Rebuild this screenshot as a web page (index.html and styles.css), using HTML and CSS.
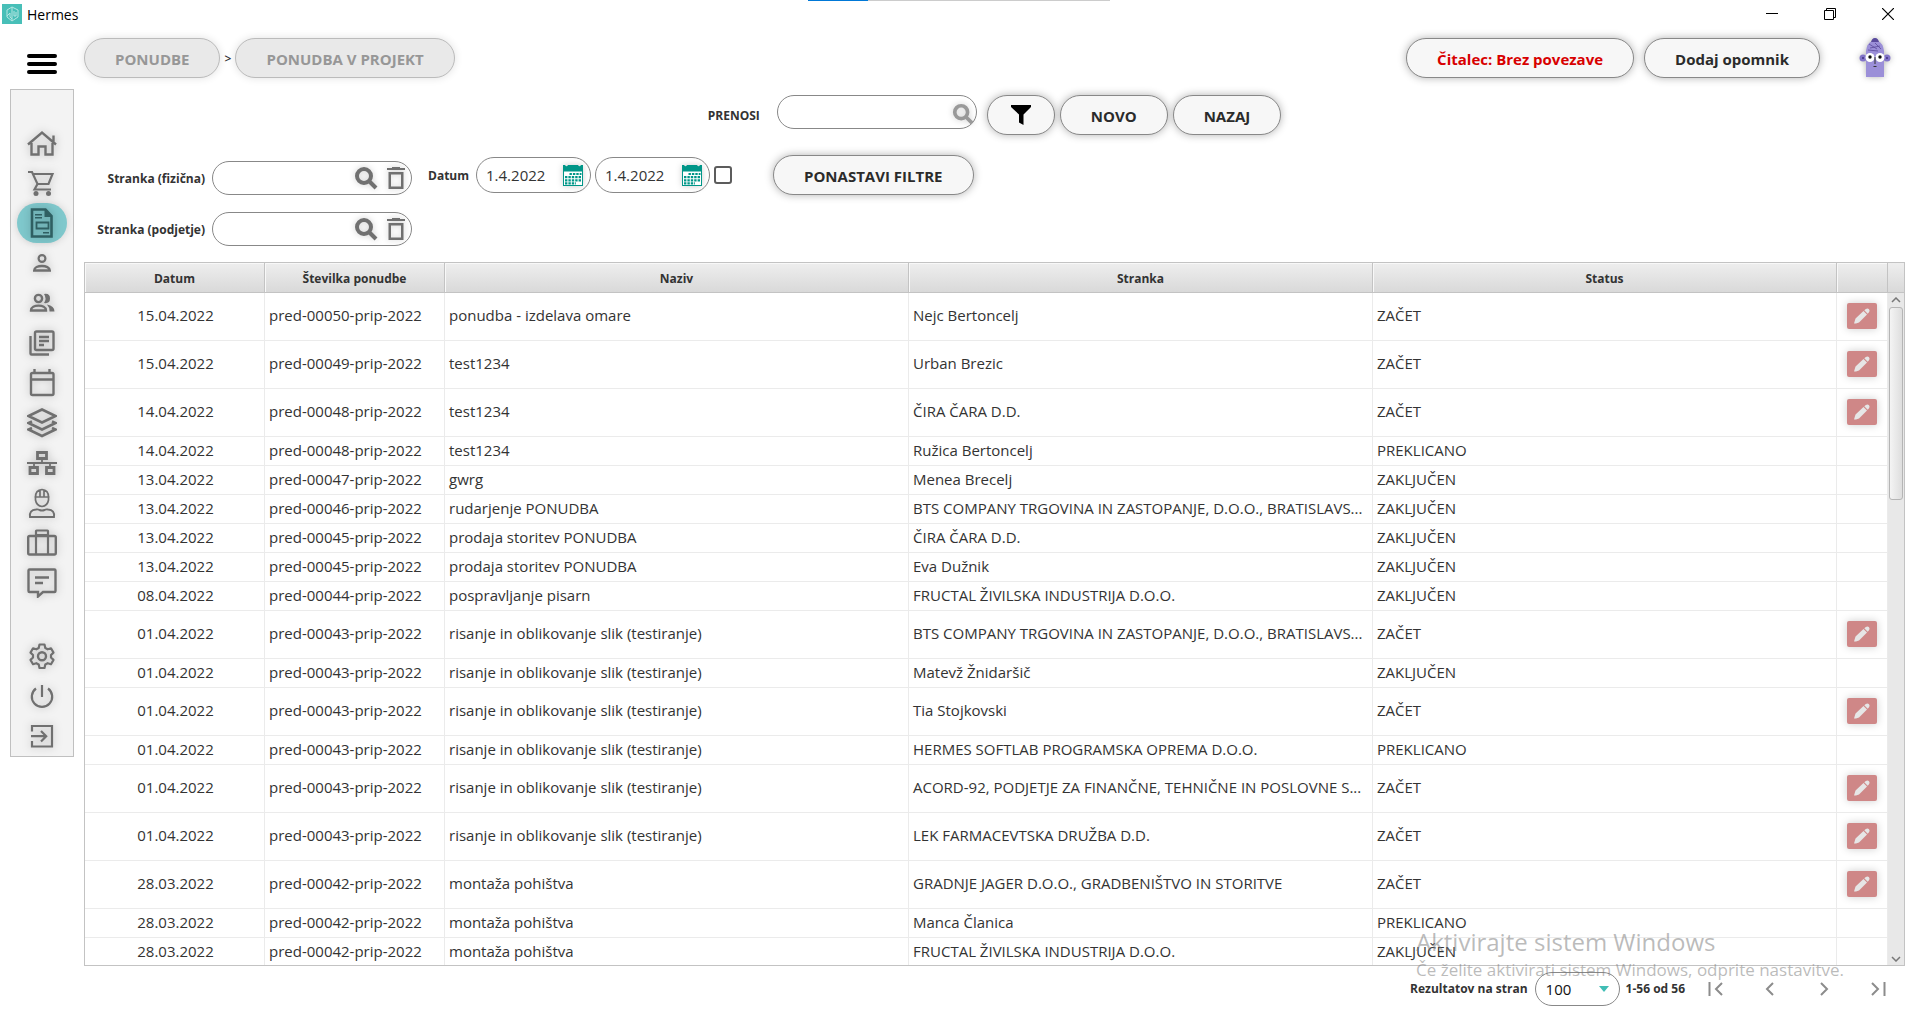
FILE: index.html
```
<!DOCTYPE html>
<html lang="sl">
<head>
  <meta charset="UTF-8">
  <title>Hermes</title>
  <meta name="viewport" content="width=device-width, initial-scale=1.0">
  <link rel="stylesheet" href="styles.css">
</head>
<body>
  <svg class="sprite" aria-hidden="true">
    <symbol id="i-search" viewBox="0 0 24 24"><circle cx="10" cy="10" r="7" fill="none" stroke="currentColor" stroke-width="4"/><path d="M15 15l7 7" stroke="currentColor" stroke-width="4"/></symbol>
    <symbol id="i-trash" viewBox="0 0 18 22"><path d="M0 1h5V0h8v1h5v2H0zM1.500 5h15v17h-15zM4 7.500v12h10v-12z" fill="currentColor" fill-rule="evenodd"/></symbol>
    <symbol id="i-calendar-green" viewBox="0 0 20 22"><path d="M0 1h2q1.500 2.500 3 0h10q1.500 2.500 3 0h2v21H0z" fill="#009688"/><path d="M1 7.500h18V21H1z" fill="#fff"/><path d="M6.500 10h12M2 13.200h16.500M2 16.400h16.500M2 19.400h11" stroke="#009688" stroke-width="2.200" stroke-dasharray="2.400 1"/></symbol>
    <symbol id="i-pencil" viewBox="0 0 18 18"><path d="M1 16.500l1.500-5L10.500 4l3.500 3.500L6 15.500l-3 1zM11.300 3.300l1.500-1.300q2-1.200 3.200.2t0 3l-1.300 1.500z" fill="#e6e6e6"/></symbol>
  </svg>

  <div class="titlebar">
    <svg class="logo" viewBox="0 0 20 20"><rect width="20" height="20" fill="#48bfb8"/><path d="M10 3l-5 3v7l5 4 6-4V6zM5 12l3-3v4l2 2M10 3v14M12 7v5h2V8" fill="none" stroke="#b5e6e2"/></svg>
    <span class="title">Hermes</span>
    <div class="window-buttons">
      <button aria-label="Minimiraj"><svg width="12" height="12" viewBox="0 0 12 12"><path d="M0 5.500h12" stroke="#000"/></svg></button>
      <button aria-label="Obnovi"><svg width="12" height="12" viewBox="0 0 12 12"><path d="M.5 2.500h9v9h-9zM2.500 2V.5h9v9H10" fill="none" stroke="#000"/></svg></button>
      <button aria-label="Zapri"><svg width="12" height="12" viewBox="0 0 12 12"><path d="M0 0l12 12M12 0L0 12" stroke="#000" stroke-width="1.200"/></svg></button>
    </div>
    <div class="progress"></div>
  </div>

  <div class="app">
    <aside>
      <button class="menu" aria-label="Meni"><svg width="30" height="20" viewBox="0 0 30 20"><path d="M2 2h26M2 10h26M2 18h26" stroke="#000" stroke-width="4" stroke-linecap="round"/></svg></button>
      <nav class="sidebar">
        <a href="#" aria-label="Domov"><svg viewBox="0 0 30 30"><path d="M1 16.500L15 4.500l14 12M4.500 15v11.500h7v-8h7v8h7V15M26.500 14V7.500" fill="none" stroke="currentColor" stroke-width="2.400"/></svg></a>
        <a href="#" aria-label="Prodaja"><svg viewBox="0 0 30 30"><path d="M1 4h4l5.500 12h11L25.500 6H6.500M10.500 16l-3 5.500H24" fill="none" stroke="currentColor" stroke-width="2.200"/><circle cx="9" cy="25.500" r="2.500" fill="currentColor"/><circle cx="21.500" cy="25.500" r="2.500" fill="currentColor"/></svg></a>
        <a href="#" class="active" aria-label="Ponudbe"><svg viewBox="0 0 30 30"><path d="M5 1.500h13.500l6 6.500v20.500H5z" fill="none" stroke="currentColor" stroke-width="2.600"/><path d="M17.500 1.500v7.500h7zM8 6h7v1.500H8zM8 9h7v1.500H8zM16 24h6v1.500h-6z" fill="currentColor"/><path d="M9.500 14.500h12v6h-12z" fill="none" stroke="currentColor" stroke-width="1.800"/></svg></a>
        <a href="#" aria-label="Stranka"><svg viewBox="0 0 30 30"><circle cx="15" cy="10.500" r="3.400" fill="none" stroke="currentColor" stroke-width="2.200"/><path d="M7.200 22.500c0-6 15.600-6 15.600 0z" fill="none" stroke="currentColor" stroke-width="2.400"/></svg></a>
        <a href="#" aria-label="Stranke"><svg viewBox="0 0 30 30"><circle cx="11.500" cy="10.500" r="3.600" fill="none" stroke="currentColor" stroke-width="2.400"/><path d="M4 22.500c0-6.500 15-6.500 15 0z" fill="none" stroke="currentColor" stroke-width="2.400"/><path d="M17 6q6-1 6 4.500t-6 4.500q3-4.500 0-9zM20 16.500q7.500 1.500 7.500 7h-5q0-4.500-2.500-7z" fill="currentColor"/></svg></a>
        <a href="#" aria-label="Dokumenti"><svg viewBox="0 0 30 30"><rect x="8" y="3.500" width="18.500" height="18.500" rx="1.500" fill="none" stroke="currentColor" stroke-width="2.400"/><path d="M3.500 8v17.500q0 1 1 1H22M12 9h10M12 13h10M12 17h5" fill="none" stroke="currentColor" stroke-width="2.400"/></svg></a>
        <a href="#" aria-label="Koledar"><svg viewBox="0 0 30 30"><rect x="4" y="5" width="22.500" height="22" rx="1.500" fill="none" stroke="currentColor" stroke-width="2.400"/><path d="M3 11.500h24M7.500 1v4M22.500 1v4" stroke="currentColor" stroke-width="2.400"/></svg></a>
        <a href="#" aria-label="Artikli"><svg viewBox="0 0 30 30"><path d="M15 1.500l13.500 6.500L15 14.500 1.500 8zM5 13.500L1.500 15 15 21.500 28.500 15 25 13.500M5 20l-3.500 1.500L15 28l13.500-6.500L25 20" fill="none" stroke="currentColor" stroke-width="2.500"/></svg></a>
        <a href="#" aria-label="Struktura"><svg viewBox="0 0 30 30"><path d="M0 15h30M15 11v4M7 15v4M23 15v4" stroke="currentColor" stroke-width="1.800"/><path d="M10.500 4.500h9v6h-9zM3 19.500h7.500v6H3zM19.500 19.500H27v6h-7.500z" fill="none" stroke="currentColor" stroke-width="2.800"/></svg></a>
        <a href="#" aria-label="Delavci"><svg viewBox="0 0 30 30"><path d="M8.500 9q0-7 6.500-7.500 6.500.5 6.500 7.500v3q-1 6-6.500 6.500-5.500-.5-6.500-6.500zM7.500 9h15M13 2v7M17 2v7" fill="none" stroke="currentColor" stroke-width="1.700"/><path d="M3 29q-1-7 6-7.500 2-.5 3.500.5 2.500 1 5 0 1.500-1 3.500-.5 7 .5 6 7.500z" fill="none" stroke="currentColor" stroke-width="1.900"/></svg></a>
        <a href="#" aria-label="Projekti"><svg viewBox="0 0 30 30"><rect x="1.200" y="8" width="27.600" height="18.500" rx="1.500" fill="none" stroke="currentColor" stroke-width="2.400"/><path d="M9 26V3q0-.5.500-.5h11q.5 0 .5.500v23M9 7h12" fill="none" stroke="currentColor" stroke-width="2.200"/></svg></a>
        <a href="#" aria-label="Sporočila"><svg viewBox="0 0 30 30"><path d="M2.500 1.500h25q1 0 1 1V23q0 1-1 1H16l-5 4.500V24H2.500q-1 0-1-1V2.500q0-1 1-1zM8 9.500h14M8 15h8" fill="none" stroke="currentColor" stroke-width="2.400"/></svg></a>
        <a href="#" class="group" aria-label="Nastavitve"><svg viewBox="0 0 30 30"><path d="M12.500 3.500h5l.8 3.500 2.400 1.300 3.300-1 2.500 4.300-2.500 2.400v2.500l2.500 2.400-2.500 4.300-3.300-1-2.400 1.300-.8 3.500h-5l-.8-3.500-2.400-1.300-3.300 1-2.500-4.300L6 16.500V14l-2.500-2.400L6 7.300l3.300 1L11.700 7z" fill="none" stroke="currentColor" stroke-width="2.200" stroke-linejoin="round"/><circle cx="15" cy="15.200" r="4" fill="none" stroke="currentColor" stroke-width="2.400"/></svg></a>
        <a href="#" aria-label="Odjava"><svg viewBox="0 0 30 30"><path d="M9 7.500a10.200 10.200 0 1 0 12 0M15 4v12" fill="none" stroke="currentColor" stroke-width="2.200"/></svg></a>
        <a href="#" aria-label="Izhod"><svg viewBox="0 0 30 30"><path d="M5 10.500V5h20v20.500H5V20M4 15.200h14M14 10l5.200 5.200L14 20.500" fill="none" stroke="currentColor" stroke-width="2.200"/></svg></a>
      </nav>
    </aside>

    <main>
      <header>
        <button class="btn" disabled>PONUDBE</button>
        <span class="crumb">&gt;</span>
        <button class="btn" disabled>PONUDBA V PROJEKT</button>
        <button class="btn reader">Čitalec: Brez povezave</button>
        <button class="btn reminder">Dodaj opomnik</button>
        <svg class="avatar" viewBox="0 0 32 40">
          <path d="M7 39V13Q8 5 13 3q1-3 3-3t3 3q5 2 6 10v26z" fill="#9b8fd8"/>
          <path d="M12 4q1-4 4-4t4 4z" fill="#5a4a9c"/>
          <path d="M10 6l8 5M11 10l10-2M16 5l6 6M9 12l10 1" stroke="#5a4a9c" stroke-width=".8"/>
          <circle cx="4" cy="20" r="3.500" fill="#8274c8"/><circle cx="28" cy="20" r="3.500" fill="#8274c8"/>
          <path d="M3 19h2v2H3zM27 19h2v2h-2z" fill="#4f4192"/>
          <circle cx="11" cy="19.500" r="4.500" fill="#fff"/><circle cx="21" cy="19.500" r="4.500" fill="#fff"/>
          <circle cx="11" cy="19" r="1.700" fill="#111"/><circle cx="21" cy="19" r="1.700" fill="#111"/>
          <path d="M16 19v7M14.500 28.500h3" stroke="#333" fill="none"/>
        </svg>
      </header>

      <form class="search-row">
        <label for="search">PRENOSI</label>
        <div class="field pale"><input id="search" type="text"><svg class="search-icon"><use href="#i-search"/></svg></div>
        <div class="actions">
          <button type="button" class="btn filter" aria-label="Filter"><svg width="20" height="20" viewBox="0 0 20 20"><path d="M0 0h20v2l-7.500 7.500V20L8 17.500v-8L0 2z"/></svg></button>
          <button type="button" class="btn">NOVO</button>
          <button type="button" class="btn">NAZAJ</button>
        </div>
      </form>

      <form class="filters">
        <div class="clients">
          <label for="person">Stranka (fizična)</label>
          <div class="field"><input id="person" type="text"><svg class="search-icon"><use href="#i-search"/></svg><svg class="trash-icon"><use href="#i-trash"/></svg></div>
          <label for="company">Stranka (podjetje)</label>
          <div class="field"><input id="company" type="text"><svg class="search-icon"><use href="#i-search"/></svg><svg class="trash-icon"><use href="#i-trash"/></svg></div>
        </div>
        <div class="dates">
          <label for="from">Datum</label>
          <div class="field date"><input id="from" type="text" value="1.4.2022"><svg><use href="#i-calendar-green"/></svg></div>
          <div class="field date"><input aria-label="Datum do" type="text" value="1.4.2022"><svg><use href="#i-calendar-green"/></svg></div>
          <input class="check" type="checkbox" aria-label="Filtriraj po datumu">
        </div>
        <button type="reset" class="btn reset">PONASTAVI FILTRE</button>
      </form>

      <div class="table-box">
        <div class="table-view">
          <table>
            <colgroup><col class="c-short"><col class="c-short"><col><col><col><col class="c-edit"></colgroup>
            <thead>
              <tr><th>Datum</th><th>Številka ponudbe</th><th>Naziv</th><th>Stranka</th><th>Status</th><th></th></tr>
            </thead>
            <tbody>
              <tr><td>15.04.2022</td><td>pred-00050-prip-2022</td><td>ponudba - izdelava omare</td><td>Nejc Bertoncelj</td><td>ZAČET</td><td><button class="edit" aria-label="Uredi"><svg><use href="#i-pencil"/></svg></button></td></tr>
              <tr><td>15.04.2022</td><td>pred-00049-prip-2022</td><td>test1234</td><td>Urban Brezic</td><td>ZAČET</td><td><button class="edit" aria-label="Uredi"><svg><use href="#i-pencil"/></svg></button></td></tr>
              <tr><td>14.04.2022</td><td>pred-00048-prip-2022</td><td>test1234</td><td>ČIRA ČARA D.D.</td><td>ZAČET</td><td><button class="edit" aria-label="Uredi"><svg><use href="#i-pencil"/></svg></button></td></tr>
              <tr><td>14.04.2022</td><td>pred-00048-prip-2022</td><td>test1234</td><td>Ružica Bertoncelj</td><td>PREKLICANO</td><td></td></tr>
              <tr><td>13.04.2022</td><td>pred-00047-prip-2022</td><td>gwrg</td><td>Menea Brecelj</td><td>ZAKLJUČEN</td><td></td></tr>
              <tr><td>13.04.2022</td><td>pred-00046-prip-2022</td><td>rudarjenje PONUDBA</td><td>BTS COMPANY TRGOVINA IN ZASTOPANJE, D.O.O., BRATISLAVS...</td><td>ZAKLJUČEN</td><td></td></tr>
              <tr><td>13.04.2022</td><td>pred-00045-prip-2022</td><td>prodaja storitev PONUDBA</td><td>ČIRA ČARA D.D.</td><td>ZAKLJUČEN</td><td></td></tr>
              <tr><td>13.04.2022</td><td>pred-00045-prip-2022</td><td>prodaja storitev PONUDBA</td><td>Eva Dužnik</td><td>ZAKLJUČEN</td><td></td></tr>
              <tr><td>08.04.2022</td><td>pred-00044-prip-2022</td><td>pospravljanje pisarn</td><td>FRUCTAL ŽIVILSKA INDUSTRIJA D.O.O.</td><td>ZAKLJUČEN</td><td></td></tr>
              <tr><td>01.04.2022</td><td>pred-00043-prip-2022</td><td>risanje in oblikovanje slik (testiranje)</td><td>BTS COMPANY TRGOVINA IN ZASTOPANJE, D.O.O., BRATISLAVS...</td><td>ZAČET</td><td><button class="edit" aria-label="Uredi"><svg><use href="#i-pencil"/></svg></button></td></tr>
              <tr><td>01.04.2022</td><td>pred-00043-prip-2022</td><td>risanje in oblikovanje slik (testiranje)</td><td>Matevž Žnidaršič</td><td>ZAKLJUČEN</td><td></td></tr>
              <tr><td>01.04.2022</td><td>pred-00043-prip-2022</td><td>risanje in oblikovanje slik (testiranje)</td><td>Tia Stojkovski</td><td>ZAČET</td><td><button class="edit" aria-label="Uredi"><svg><use href="#i-pencil"/></svg></button></td></tr>
              <tr><td>01.04.2022</td><td>pred-00043-prip-2022</td><td>risanje in oblikovanje slik (testiranje)</td><td>HERMES SOFTLAB PROGRAMSKA OPREMA D.O.O.</td><td>PREKLICANO</td><td></td></tr>
              <tr><td>01.04.2022</td><td>pred-00043-prip-2022</td><td>risanje in oblikovanje slik (testiranje)</td><td>ACORD-92, PODJETJE ZA FINANČNE, TEHNIČNE IN POSLOVNE S...</td><td>ZAČET</td><td><button class="edit" aria-label="Uredi"><svg><use href="#i-pencil"/></svg></button></td></tr>
              <tr><td>01.04.2022</td><td>pred-00043-prip-2022</td><td>risanje in oblikovanje slik (testiranje)</td><td>LEK FARMACEVTSKA DRUŽBA D.D.</td><td>ZAČET</td><td><button class="edit" aria-label="Uredi"><svg><use href="#i-pencil"/></svg></button></td></tr>
              <tr><td>28.03.2022</td><td>pred-00042-prip-2022</td><td>montaža pohištva</td><td>GRADNJE JAGER D.O.O., GRADBENIŠTVO IN STORITVE</td><td>ZAČET</td><td><button class="edit" aria-label="Uredi"><svg><use href="#i-pencil"/></svg></button></td></tr>
              <tr><td>28.03.2022</td><td>pred-00042-prip-2022</td><td>montaža pohištva</td><td>Manca Članica</td><td>PREKLICANO</td><td></td></tr>
              <tr><td>28.03.2022</td><td>pred-00042-prip-2022</td><td>montaža pohištva</td><td>FRUCTAL ŽIVILSKA INDUSTRIJA D.O.O.</td><td>ZAKLJUČEN</td><td></td></tr>
            </tbody>
          </table>
        </div>
        <div class="scrollbar">
          <div class="corner"></div>
          <svg viewBox="0 0 10 6"><path d="M1 5l4-4 4 4" fill="none" stroke="#777" stroke-width="1.500"/></svg>
          <div class="thumb"></div>
          <svg class="down" viewBox="0 0 10 6"><path d="M1 1l4 4 4-4" fill="none" stroke="#777" stroke-width="1.500"/></svg>
        </div>
      </div>

      <footer>
        <label for="per-page">Rezultatov na stran</label>
        <div class="select"><select id="per-page"><option>100</option></select></div>
        <span class="range">1-56 od 56</span>
        <div class="pager">
          <button aria-label="Prva stran"><svg width="16" height="16" viewBox="0 0 16 16"><path d="M1.500 1v14M14 2L8 8l6 6"/></svg></button>
          <button aria-label="Prejšnja stran"><svg width="16" height="16" viewBox="0 0 16 16"><path d="M11 2L5 8l6 6"/></svg></button>
          <button aria-label="Naslednja stran"><svg width="16" height="16" viewBox="0 0 16 16"><path d="M5 2l6 6-6 6"/></svg></button>
          <button aria-label="Zadnja stran"><svg width="16" height="16" viewBox="0 0 16 16"><path d="M2 2l6 6-6 6M14.500 1v14"/></svg></button>
        </div>
      </footer>
    </main>
  </div>

  <div class="watermark">
    <p class="big">Aktivirajte sistem Windows</p>
    <p>Če želite aktivirati sistem Windows, odprite nastavitve.</p>
  </div>
</body>
</html>
```
FILE: styles.css
```
* {
  box-sizing: border-box;
}

body {
  margin: 0;
  height: 100vh;
  display: flex;
  flex-direction: column;
  overflow: hidden;
  background: #fff;
  color: #333;
  font-family: "Open Sans", sans-serif;
  font-size: 15px;
}

button,
input,
select {
  font: inherit;
  color: inherit;
  margin: 0;
}

button {
  border: none;
  background: none;
  padding: 0;
}

label {
  font-size: 12px;
  font-weight: 700;
  white-space: nowrap;
}

.sprite {
  display: none;
}

/* title bar */

.titlebar {
  position: relative;
  display: flex;
  align-items: center;
  height: 28px;
  padding: 0 26px 0 2px;
  color: #000;
}

.logo {
  width: 20px;
  height: 20px;
}

.title {
  margin-left: 5px;
  font-size: 14px;
}

.window-buttons {
  display: flex;
  gap: 46px;
  margin-left: auto;
}

.window-buttons button {
  width: 12px;
  height: 12px;
}

.window-buttons svg {
  display: block;
}

.progress {
  position: absolute;
  top: 0;
  left: 808px;
  width: 302px;
  height: 1px;
  background: linear-gradient(to right, #0078d7 20%, #ccc 20%);
}

.app {
  flex: 1;
  display: flex;
  min-height: 0;
  padding: 10px 15px 0 10px;
  gap: 10px;
}

/* sidebar */

aside {
  flex: none;
  width: 64px;
}

.menu {
  display: block;
  margin: 16px auto 15px;
}

.menu svg {
  display: block;
}

.sidebar {
  display: flex;
  flex-direction: column;
  align-items: center;
  padding-top: 33px;
  border: 1px solid #c0c0c0;
  background: #f3f3f3;
}

.sidebar a {
  display: flex;
  align-items: center;
  justify-content: center;
  width: 50px;
  height: 40px;
  border-radius: 20px;
  color: #707070;
}

.sidebar svg {
  width: 30px;
  height: 30px;
  filter: drop-shadow(0 0 4px rgba(0, 0, 0, 0.25));
}

.sidebar .active {
  background: #7fc8cc;
  color: #2f5f62;
  box-shadow: 0 0 8px rgba(0, 0, 0, 0.15);
}

.sidebar .group {
  margin-top: 33px;
}

/* buttons and fields */

.btn {
  height: 40px;
  padding: 2px 30px 0;
  border: 1px solid #888;
  border-radius: 20px;
  background: #f7f7f7;
  color: #2b2b2b;
  font-weight: 700;
  white-space: nowrap;
  box-shadow: 0 0 8px rgba(0, 0, 0, 0.3);
}

.btn:disabled {
  border-color: #bbb;
  background: #e9e9e9;
  color: #979797;
  box-shadow: 0 0 8px rgba(0, 0, 0, 0.12);
}

.field {
  display: flex;
  align-items: center;
  width: 200px;
  height: 34px;
  padding: 0 6px 0 12px;
  border: 1px solid #888;
  border-radius: 17px;
  color: #707070;
}

.field input {
  flex: 1;
  min-width: 0;
  border: none;
  outline: none;
  padding: 0;
  background: none;
  color: #333;
}

.field svg {
  flex: none;
  filter: drop-shadow(0 0 3px rgba(0, 0, 0, 0.2));
}

.search-icon {
  width: 24px;
  height: 24px;
}

.trash-icon {
  width: 18px;
  height: 22px;
  margin-left: 9px;
}

.pale {
  padding: 4px 2px 0 12px;
  color: #999;
}

.pale .search-icon {
  width: 22px;
  height: 22px;
}

/* main area */

main {
  flex: 1;
  min-width: 0;
  display: flex;
  flex-direction: column;
}

header {
  display: flex;
  align-items: center;
}

.crumb {
  width: 15px;
  text-align: center;
  font-size: 12px;
  font-weight: 600;
}

.reader {
  margin-left: auto;
  color: #d80000;
}

.reminder {
  margin-left: 10px;
}

.avatar {
  width: 32px;
  height: 40px;
  margin: 0 14px 0 39px;
  filter: drop-shadow(0 0 3px rgba(0, 0, 0, 0.3));
}

.search-row {
  display: flex;
  justify-content: center;
  margin-top: 17px;
  gap: 10px;
}

.search-row label {
  margin: 12px 7px 0 0;
}

.actions {
  display: flex;
  gap: 5px;
}

.filter {
  padding: 0 23px;
}

.filter svg {
  display: block;
}

.filters {
  display: flex;
  align-items: flex-start;
  margin-top: 20px;
}

.clients {
  display: grid;
  grid-template-columns: 121px 200px;
  gap: 17px 7px;
  align-items: center;
  padding-top: 6px;
}

.clients label {
  text-align: right;
}

.dates {
  display: flex;
  align-items: center;
  gap: 4px;
  padding-top: 2px;
}

.dates label {
  margin: 0 3px 0 16px;
}

.date {
  width: 115px;
  height: 36px;
  padding: 0 7px 0 9px;
  border-radius: 18px;
}

.date svg {
  width: 20px;
  height: 22px;
}

.check {
  appearance: none;
  width: 18px;
  height: 18px;
  border: 2px solid #5c5c5c;
  border-radius: 3px;
}

.reset {
  margin-left: 41px;
}

/* table */

.table-box {
  flex: 1;
  display: flex;
  min-height: 0;
  margin-top: 16px;
  border: 1px solid #c3c3c3;
}

.table-view {
  flex: 1;
  min-width: 0;
  overflow: hidden;
}

table {
  width: 100%;
  table-layout: fixed;
  border-collapse: separate;
  border-spacing: 0;
}

.c-short {
  width: 180px;
}

.c-edit {
  width: 51px;
}

th {
  height: 30px;
  padding: 2px 0 0;
  border-right: 1px solid #c3c3c3;
  border-bottom: 1px solid #c3c3c3;
  background: linear-gradient(#eee, #d9d9d9);
  box-shadow: inset 1px 1px #f8f8f8;
  font-size: 12px;
}

td {
  height: 29px;
  padding: 0 4px 3px;
  border-right: 1px solid #ebebeb;
  border-bottom: 1px solid #ebebeb;
  line-height: 20px;
  white-space: nowrap;
}

td:first-child {
  padding-left: 6px;
  text-align: center;
}

td:last-child {
  padding: 0 10px;
}

.edit {
  display: block;
  width: 30px;
  height: 26px;
  margin: 10px 0 11px;
  border-radius: 2px;
  background: #cf8787;
  box-shadow: 0 0 8px rgba(0, 0, 0, 0.2);
}

.edit svg {
  display: block;
  width: 18px;
  height: 18px;
  margin: auto;
}

.scrollbar {
  display: flex;
  flex-direction: column;
  align-items: center;
  width: 16px;
  background: #e8e8e8;
}

.scrollbar svg {
  flex: none;
  width: 10px;
  height: 6px;
}

.corner {
  flex: none;
  align-self: stretch;
  height: 30px;
  margin-bottom: 4px;
  border-bottom: 1px solid #c3c3c3;
  background: linear-gradient(#eee, #d9d9d9);
}

.thumb {
  flex: none;
  width: 14px;
  height: 193px;
  margin-top: 4px;
  border: 1px solid #b5b5b5;
  border-radius: 3px;
  background: linear-gradient(to right, #f4f4f4, #dedede);
}

.scrollbar .down {
  margin: auto 0 3px;
}

/* footer */

footer {
  display: flex;
  align-items: center;
  justify-content: flex-end;
  height: 61px;
  padding: 0 19px 16px 0;
}

.select {
  position: relative;
  margin: 0 6px 0 7px;
}

.select select {
  appearance: none;
  width: 85px;
  height: 34px;
  padding: 0 10px;
  border: 1px solid #888;
  border-radius: 17px;
  background: none;
  color: #111;
}

.select::after {
  content: "";
  position: absolute;
  top: 14px;
  right: 11px;
  border: 5px solid transparent;
  border-top: 6px solid #40bdb5;
  border-bottom: none;
}

.range {
  font-size: 12px;
  font-weight: 700;
}

.pager {
  display: flex;
  gap: 38px;
  margin-left: 23px;
}

.pager svg {
  display: block;
  fill: none;
  stroke: #8c8c8c;
  stroke-width: 2;
}

.watermark {
  position: absolute;
  right: 76px;
  bottom: 46px;
  color: rgba(120, 120, 120, 0.5);
  font-size: 17px;
  pointer-events: none;
}

.watermark p {
  margin: 0;
}

.watermark .big {
  font-size: 24px;
}
```
